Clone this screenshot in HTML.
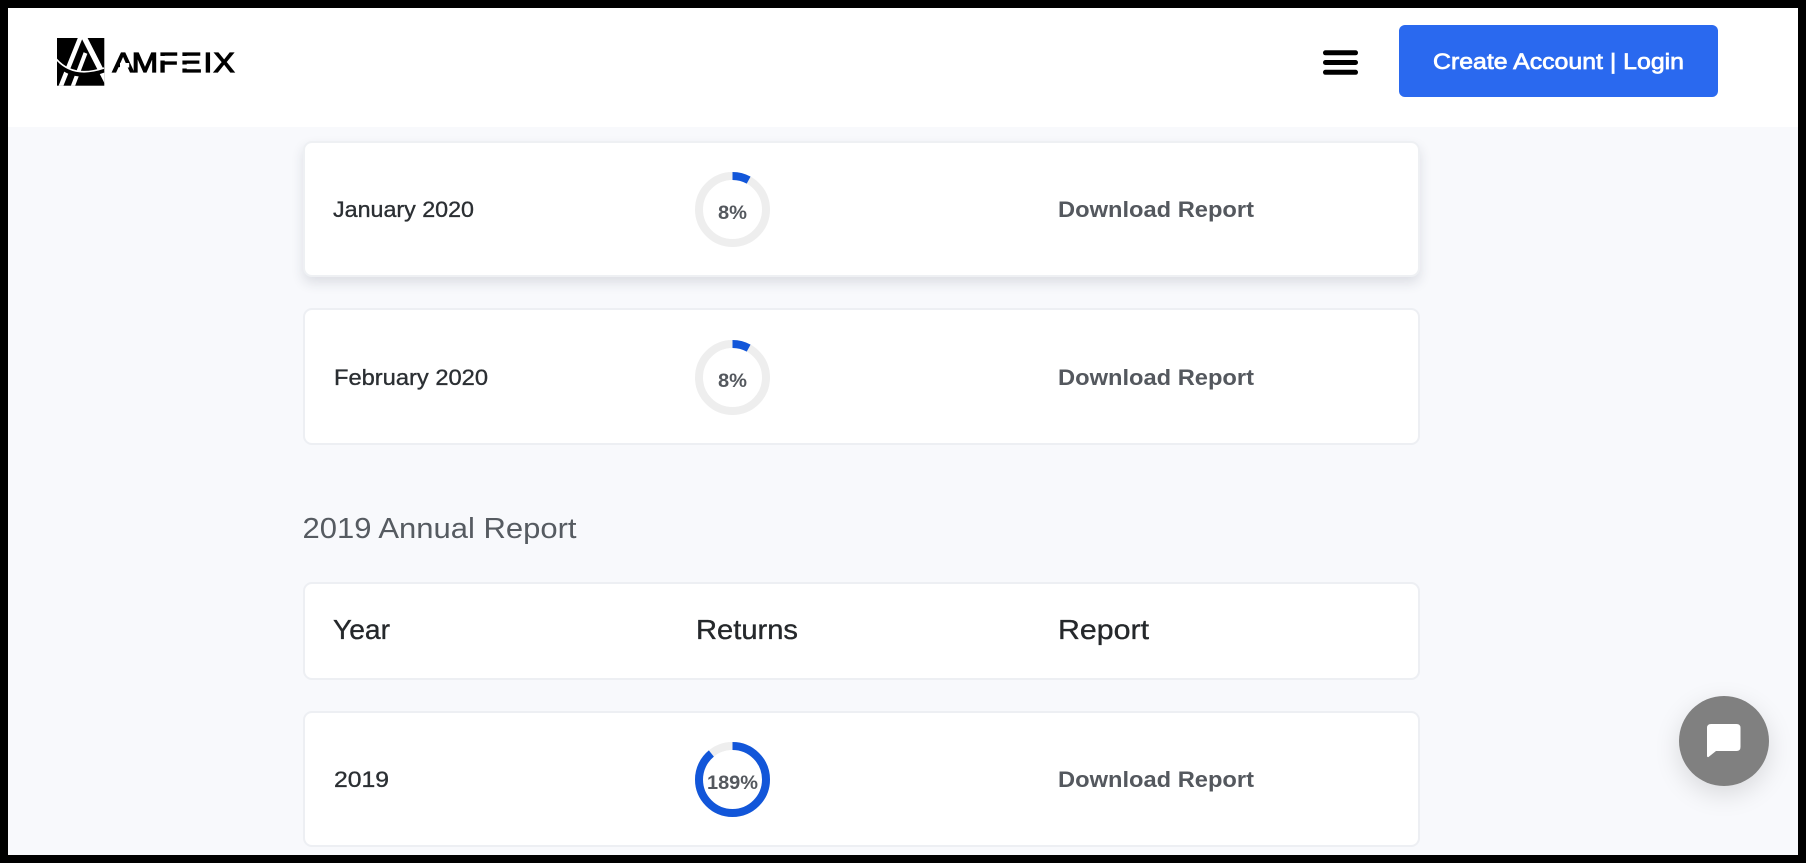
<!DOCTYPE html>
<html lang="en">
<head>
<meta charset="utf-8">
<title>AMFEIX Reports</title>
<style>
html,body{margin:0;padding:0;width:1806px;height:863px;overflow:hidden;background:#000}
#page{position:absolute;left:8px;top:8px;width:1790px;height:847px;background:#f8f9fc;overflow:hidden}
#hdr{position:absolute;left:0;top:0;width:1790px;height:119px;background:#fff}
.card{position:absolute;left:295px;width:1117px;box-sizing:border-box;background:#fff;border:2px solid #edeff3;border-radius:9px}
.hover{border-color:#eef0f3;box-shadow:0 6px 12px rgba(40,50,70,.13)}
#btn{position:absolute;left:1391px;top:17px;width:319px;height:72px;background:#2a69ef;border-radius:6px}
#chat{position:absolute;left:1671px;top:688px;width:90px;height:90px;border-radius:50%;background:#808080;box-shadow:0 8px 26px rgba(0,0,0,.13)}
svg#t{position:absolute;left:0;top:0}
text{font-family:"Liberation Sans",sans-serif}
.b{font-size:22.5px;fill:#2b2f33;stroke:#2b2f33;stroke-width:.35px}
.d{font-size:22.5px;font-weight:700;fill:#54585e}
.p{font-size:19px;font-weight:700;fill:#54585e}
.h{font-size:28px;fill:#25282b;stroke:#25282b;stroke-width:.35px}
.track{fill:none;stroke:#eeeeee;stroke-width:8}
.arc{fill:none;stroke:#1256d9;stroke-width:8}
</style>
</head>
<body>
<div id="page">
  <div id="hdr"></div>
  <div id="btn"></div>
  <div class="card hover" style="top:133px;height:136px"></div>
  <div class="card" style="top:300px;height:137px"></div>
  <div class="card" style="top:574px;height:98px"></div>
  <div class="card" style="top:703px;height:136px"></div>
  <div id="chat"></div>
</div>
<svg id="t" width="1806" height="863" viewBox="0 0 1806 863" xmlns="http://www.w3.org/2000/svg">
  <defs><clipPath id="sq"><rect x="57" y="38" width="47.300" height="47.700"/></clipPath></defs>
  <!-- logo mark -->
  <rect x="57" y="38" width="47.300" height="47.700" fill="#000"/>
  <g clip-path="url(#sq)" fill="none" stroke-linecap="butt">
    <path d="M81 36L60.500 87" stroke="#fff" stroke-width="4.500"/>
    <path d="M85.500 53L72.500 87" stroke="#fff" stroke-width="4"/>
    <path d="M83.500 36L108 84" stroke="#fff" stroke-width="5.500"/>
    <path d="M55 60Q72 82 104 70" stroke="#000" stroke-width="5"/>
    <path d="M55 57.500Q72 79 104 68" stroke="#fff" stroke-width="1.700"/>
  </g>
  <!-- logo word -->
  <text transform="translate(112.500 0) scale(1.15 1)" x="0 16.700 40 59.100 79.100 87.800" y="72" font-size="27.500" fill="#000" stroke="#000" stroke-width="1.200">AMFEIX</text>
  <rect x="120" y="63" width="9.200" height="4.500" fill="#fff"/>
  <rect x="160" y="56" width="22" height="4.500" fill="#fff"/>
  <rect x="181" y="56" width="22" height="4.500" fill="#fff"/>
  <rect x="181" y="64.500" width="22" height="4" fill="#fff"/>
  <!-- hamburger -->
  <rect x="1323" y="50.300" width="35" height="5" rx="2.500" fill="#000"/>
  <rect x="1323" y="60" width="35" height="5" rx="2.500" fill="#000"/>
  <rect x="1323" y="69.800" width="35" height="5" rx="2.500" fill="#000"/>
  <text x="1433" y="69" font-size="22.500" fill="#fff" stroke="#fff" stroke-width=".7" textLength="251" lengthAdjust="spacingAndGlyphs">Create Account | Login</text>

  <!-- row 1 -->
  <text class="b" x="333" y="217" textLength="141" lengthAdjust="spacingAndGlyphs">January 2020</text>
  <circle class="track" cx="732.500" cy="209.500" r="33.500"/>
  <circle class="arc" cx="732.500" cy="209.500" r="33.500" stroke-dasharray="16.84 210.5" transform="rotate(-90 732.500 209.500)"/>
  <text class="p" x="718" y="219" textLength="29" lengthAdjust="spacingAndGlyphs">8%</text>
  <text class="d" x="1058" y="217" textLength="196" lengthAdjust="spacingAndGlyphs">Download Report</text>

  <!-- row 2 -->
  <text class="b" x="334" y="385" textLength="154" lengthAdjust="spacingAndGlyphs">February 2020</text>
  <circle class="track" cx="732.500" cy="377.500" r="33.500"/>
  <circle class="arc" cx="732.500" cy="377.500" r="33.500" stroke-dasharray="16.84 210.5" transform="rotate(-90 732.500 377.500)"/>
  <text class="p" x="718" y="387" textLength="29" lengthAdjust="spacingAndGlyphs">8%</text>
  <text class="d" x="1058" y="385" textLength="196" lengthAdjust="spacingAndGlyphs">Download Report</text>

  <!-- heading -->
  <text x="302.500" y="538" font-size="28.500" fill="#565b61" textLength="274" lengthAdjust="spacingAndGlyphs">2019 Annual Report</text>

  <!-- table head -->
  <text class="h" x="333" y="639" textLength="57" lengthAdjust="spacingAndGlyphs">Year</text>
  <text class="h" x="696" y="639" textLength="102" lengthAdjust="spacingAndGlyphs">Returns</text>
  <text class="h" x="1058" y="639" textLength="91" lengthAdjust="spacingAndGlyphs">Report</text>

  <!-- row 3 -->
  <text class="b" x="334" y="787" textLength="55" lengthAdjust="spacingAndGlyphs">2019</text>
  <circle class="track" cx="732.500" cy="779.500" r="33.500"/>
  <circle class="arc" cx="732.500" cy="779.500" r="33.500" stroke-dasharray="187.3 210.5" transform="rotate(-90 732.500 779.500)"/>
  <text class="p" x="707" y="789" textLength="51" lengthAdjust="spacingAndGlyphs">189%</text>
  <text class="d" x="1058" y="787" textLength="196" lengthAdjust="spacingAndGlyphs">Download Report</text>

  <!-- chat icon -->
  <path d="M1711 724H1736.500Q1740.500 724 1740.500 728V747Q1740.500 751 1736.500 751H1716L1708.500 757Q1707 757.500 1707 755.500V728Q1707 724 1711 724Z" fill="#fff"/>
</svg>
</body>
</html>
